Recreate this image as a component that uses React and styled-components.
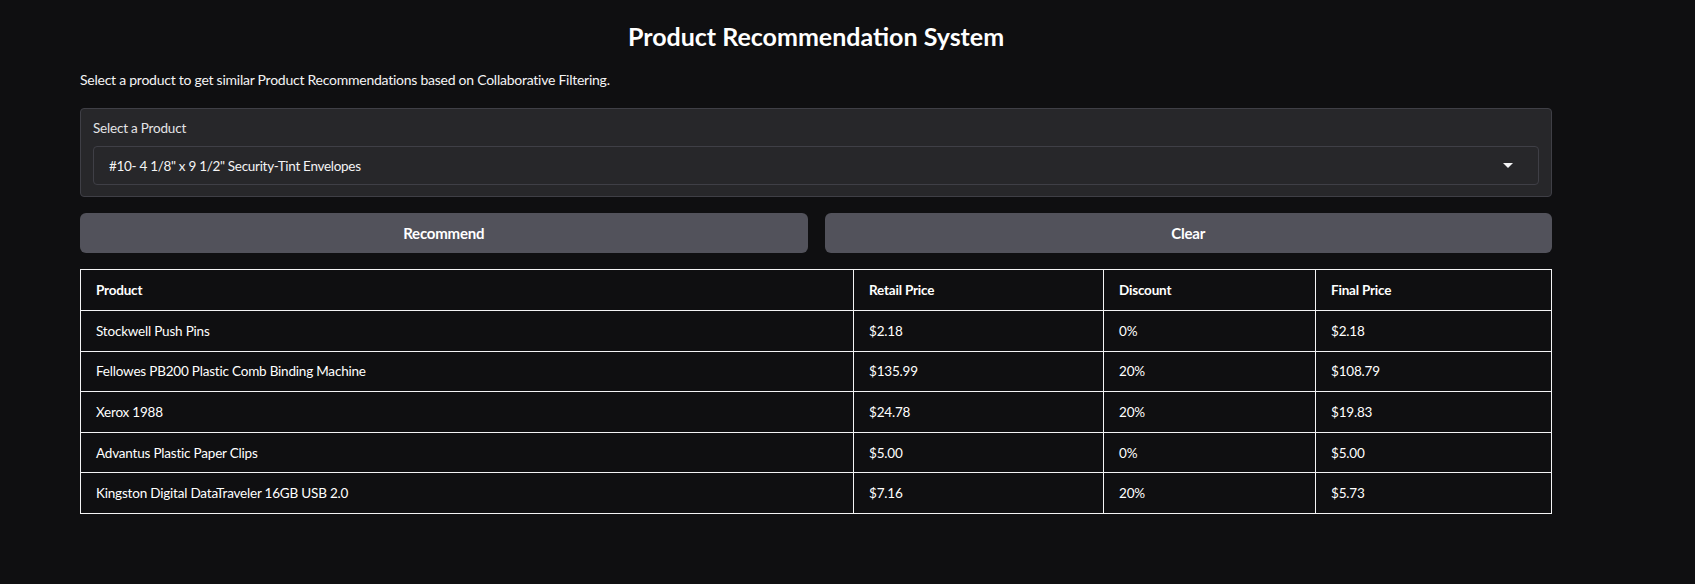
import React from 'react'
import styled, { createGlobalStyle } from 'styled-components'

const GlobalStyle = createGlobalStyle`
  html, body {
    margin: 0;
    padding: 0;
    background: #0f0f11;
  }
  body {
    font-family: "Lato", "Noto Sans", sans-serif;
    color: #f4f4f5;
  }
`;

const Page = styled.main`
  width: 1472px;
  margin-left: 80px;
  padding-top: 19px;
  padding-bottom: 60px;
  display: flex;
  flex-direction: column;
`;

const Title = styled.h1`
  margin: 0;
  text-align: center;
  font-size: 25px;
  line-height: 34px;
  font-weight: 700;
  color: #ffffff;
`;

const Intro = styled.p`
  margin: 17px 0 18px;
  font-size: 14px;
  line-height: 20px;
  letter-spacing: -0.25px;
  color: #f4f4f5;
`;

const Panel = styled.section`
  background: #27272a;
  border: 1px solid #3f3f46;
  border-radius: 4px;
  padding: 9px 12px 11px;
  display: flex;
  flex-direction: column;
  gap: 8px;
`;

const Label = styled.label`
  font-size: 13.5px;
  line-height: 20px;
  letter-spacing: -0.2px;
  color: #e4e4e7;
`;

const Select = styled.div`
  height: 37px;
  border: 1px solid #3f3f46;
  border-radius: 4px;
  background: #27272a;
  display: flex;
  align-items: center;
  justify-content: space-between;
  padding: 0 30px 0 15px;
  font-size: 13.5px;
  letter-spacing: -0.3px;
  color: #f4f4f5;
`;

const Caret = styled.span`
  width: 0;
  height: 0;
  border-left: 5px solid transparent;
  border-right: 5px solid transparent;
  border-top: 5px solid #f4f4f5;
  margin-right: -5px;
`;

const Actions = styled.div`
  display: grid;
  grid-template-columns: 1fr 1fr;
  gap: 17px;
  margin-top: 16px;
`;

const Button = styled.button`
  height: 40px;
  border: none;
  border-radius: 6px;
  background: #52525b;
  color: #ffffff;
  font-family: inherit;
  font-size: 15px;
  font-weight: 700;
  letter-spacing: -0.2px;
  cursor: pointer;
`;

const Table = styled.table`
  margin-top: 16px;
  width: 1472px;
  border-collapse: collapse;
  table-layout: fixed;
  border: 1px solid #f4f4f5;
  font-size: 13.5px;
  letter-spacing: -0.2px;
`;

const Cell = styled.td`
  border: 1px solid #f4f4f5;
  padding: 0 15px;
  height: ${(p) => (p.$head ? 40 : 39.6)}px;
  line-height: 20px;
  text-align: left;
  font-weight: ${(p) => (p.$head ? 700 : 400)};
  color: #ffffff;
`;

const columns = [
  { name: 'Product', width: 773 },
  { name: 'Retail Price', width: 250 },
  { name: 'Discount', width: 212 },
  { name: 'Final Price', width: 236 },
];

const rows = [
  ['Stockwell Push Pins', '$2.18', '0%', '$2.18'],
  ['Fellowes PB200 Plastic Comb Binding Machine', '$135.99', '20%', '$108.79'],
  ['Xerox 1988', '$24.78', '20%', '$19.83'],
  ['Advantus Plastic Paper Clips', '$5.00', '0%', '$5.00'],
  ['Kingston Digital DataTraveler 16GB USB 2.0', '$7.16', '20%', '$5.73'],
];

const App = () => {
  return (
    <>
      <GlobalStyle />
      <Page>
        <Title>Product Recommendation System</Title>
        <Intro>
          Select a product to get similar Product Recommendations based on Collaborative Filtering.
        </Intro>
        <Panel>
          <Label>Select a Product</Label>
          <Select>
            <span>#10- 4 1/8" x 9 1/2" Security-Tint Envelopes</span>
            <Caret />
          </Select>
        </Panel>
        <Actions>
          <Button>Recommend</Button>
          <Button>Clear</Button>
        </Actions>
        <Table>
          <colgroup>
            {columns.map((c) => (
              <col key={c.name} style={{ width: c.width }} />
            ))}
          </colgroup>
          <thead>
            <tr>
              {columns.map((c) => (
                <Cell as="th" $head key={c.name}>{c.name}</Cell>
              ))}
            </tr>
          </thead>
          <tbody>
            {rows.map((r) => (
              <tr key={r[0]}>
                {r.map((v, i) => (
                  <Cell key={i}>{v}</Cell>
                ))}
              </tr>
            ))}
          </tbody>
        </Table>
      </Page>
    </>
  )
}

export default App
